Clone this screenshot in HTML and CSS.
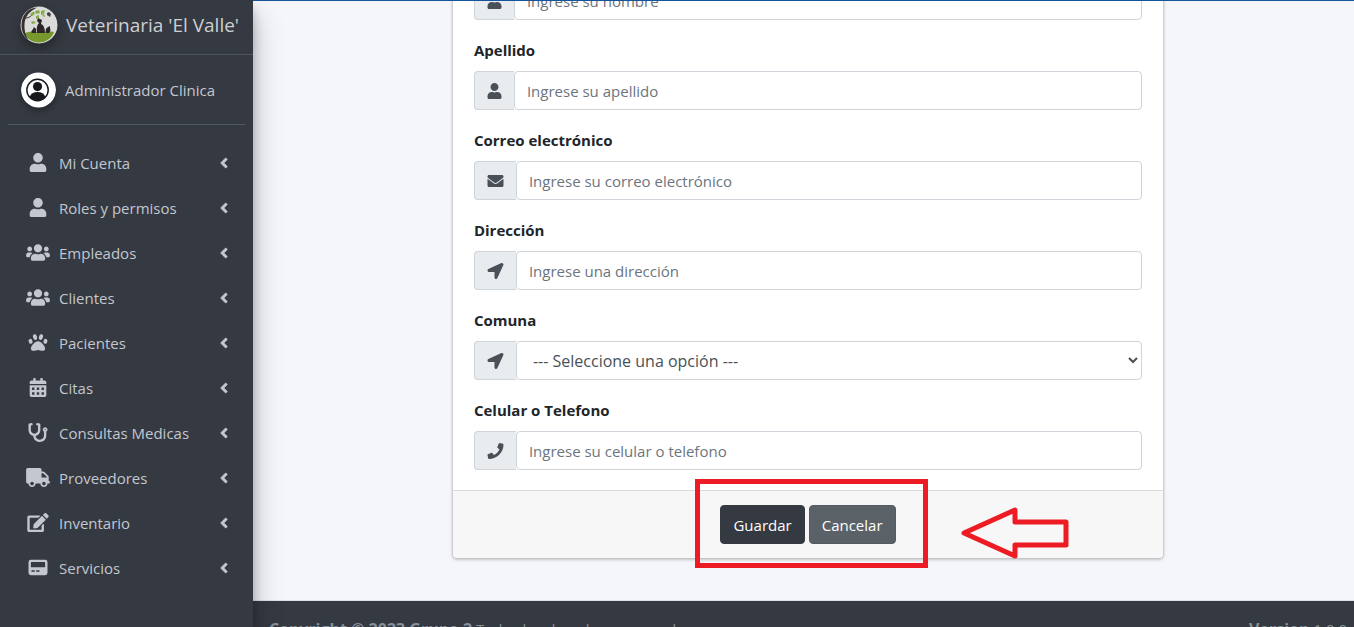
FILE: index.html
```
<!DOCTYPE html>
<html lang="es">
<head>
<meta charset="utf-8">
<meta name="viewport" content="width=device-width, initial-scale=1">
<title>Veterinaria 'El Valle'</title>
<link rel="stylesheet" href="styles.css">
</head>
<body>
<svg class="sprite" aria-hidden="true">
  <symbol id="user" viewBox="0 0 448 512"><path d="M224 256c70.7 0 128-57.3 128-128S294.7 0 224 0 96 57.3 96 128s57.3 128 128 128zm89.6 32h-16.7c-22.2 10.2-46.9 16-72.9 16s-50.6-5.8-72.9-16h-16.7C60.2 288 0 348.2 0 422.4V464c0 26.5 21.5 48 48 48h352c26.5 0 48-21.5 48-48v-41.6c0-74.2-60.2-134.4-134.4-134.4z"/></symbol>
  <symbol id="users" viewBox="0 0 640 512"><path d="M96 224c35.3 0 64-28.7 64-64s-28.7-64-64-64-64 28.7-64 64 28.7 64 64 64zm448 0c35.3 0 64-28.7 64-64s-28.7-64-64-64-64 28.7-64 64 28.7 64 64 64zm32 32h-64c-17.6 0-33.5 7.1-45.1 18.6 40.3 22.1 68.9 62 75.1 109.4h66c17.7 0 32-14.3 32-32v-32c0-35.3-28.7-64-64-64zm-256 0c61.9 0 112-50.1 112-112S381.9 32 320 32 208 82.1 208 144s50.1 112 112 112zm76.8 32h-8.3c-20.8 10-43.9 16-68.5 16s-47.6-6-68.5-16h-8.3C179.6 288 128 339.6 128 403.2V432c0 26.5 21.5 48 48 48h288c26.5 0 48-21.5 48-48v-28.8c0-63.6-51.6-115.2-115.2-115.2zm-223.7-13.4C161.5 263.1 145.6 256 128 256H64c-35.3 0-64 28.7-64 64v32c0 17.7 14.3 32 32 32h65.9c6.3-47.4 34.9-87.3 75.2-109.4z"/></symbol>
  <symbol id="paw" viewBox="0 0 512 512"><path d="M256 224c-79.4 0-192 122.800-192 200.200 0 34.900 26.800 55.800 71.700 55.800 48.900 0 81.100-25.100 120.300-25.100 39.500 0 71.900 25.100 120.300 25.100 44.900 0 71.700-20.900 71.700-55.800C448 346.800 335.400 224 256 224z"/><ellipse cx="56" cy="224" rx="52" ry="66" transform="rotate(-18 56 224)"/><ellipse cx="456" cy="224" rx="52" ry="66" transform="rotate(18 456 224)"/><ellipse cx="176" cy="110" rx="54" ry="80" transform="rotate(-14 176 110)"/><ellipse cx="336" cy="110" rx="54" ry="80" transform="rotate(14 336 110)"/></symbol>
  <symbol id="calendar" viewBox="0 0 448 512"><path fill-rule="evenodd" d="M0 192h448v272a48 48 0 0 1-48 48H48a48 48 0 0 1-48-48zM64 256v64h64v-64zM192 256v64h64v-64zM320 256v64h64v-64zM64 384v64h64v-64zM192 384v64h64v-64zM320 384v64h64v-64z"/><path d="M448 160H0v-48a48 48 0 0 1 48-48h48V12q0-12 12-12h40q12 0 12 12v52h128V12q0-12 12-12h40q12 0 12 12v52h48a48 48 0 0 1 48 48z"/></symbol>
  <symbol id="stethoscope" viewBox="0 0 512 512"><path d="M447.1 112c-34.2.5-62.3 28.4-63 62.600-.5 24.300 12.500 45.600 32 56.800V344c0 57.300-50.200 104-112 104-60 0-109.200-44.100-111.900-99.200C265 333.800 320 269.200 320 192V36.600c0-11.400-8.100-21.300-19.300-23.500L237.800.5c-13-2.600-25.600 5.800-28.200 18.800L206.400 35c-2.600 13 5.800 25.600 18.800 28.200l30.700 6.100v121.400c0 52.900-42.200 96.700-95.100 97.200-53.400.5-96.900-42.700-96.900-96V69.400l30.700-6.100c13-2.600 21.400-15.200 18.800-28.200l-3.100-15.700C107.700 6.400 95.100-2 82.100.6L19.300 13C8.100 15.300 0 25.100 0 36.600V192c0 77.300 55.100 142 128.100 156.800C130.700 439.200 208.600 512 304 512c97 0 176-75.400 176-168V231.400c19.100-11.100 32-31.700 32-55.400 0-35.700-29.200-64.500-64.900-64zm.9 80c-8.800 0-16-7.200-16-16s7.200-16 16-16 16 7.200 16 16-7.200 16-16 16z"/></symbol>
  <symbol id="truck" viewBox="0 0 640 512"><path d="M624 352h-16V243.900c0-12.700-5.100-24.900-14.100-33.900L494 110.100c-9-9-21.200-14.100-33.900-14.100H416V48c0-26.500-21.500-48-48-48H48C21.500 0 0 21.500 0 48v320c0 26.500 21.500 48 48 48h16c0 53 43 96 96 96s96-43 96-96h128c0 53 43 96 96 96s96-43 96-96h48c8.800 0 16-7.200 16-16v-32c0-8.800-7.200-16-16-16zM160 464c-26.500 0-48-21.500-48-48s21.500-48 48-48 48 21.500 48 48-21.500 48-48 48zm320 0c-26.500 0-48-21.500-48-48s21.500-48 48-48 48 21.500 48 48-21.500 48-48 48zm80-208H416V144h44.100l99.900 99.900V256z"/></symbol>
  <symbol id="edit" viewBox="0 0 576 512"><path d="M402.6 83.2l90.2 90.2c3.800 3.800 3.800 10 0 13.800L274.400 405.600l-92.800 10.300c-12.400 1.400-22.900-9.100-21.500-21.500l10.300-92.800L388.800 83.200c3.800-3.800 10-3.800 13.800 0zm162-22.900l-48.800-48.800c-15.200-15.200-39.900-15.200-55.200 0l-35.400 35.400c-3.800 3.800-3.800 10 0 13.800l90.200 90.200c3.800 3.800 10 3.800 13.800 0l35.400-35.400c15.200-15.300 15.200-40 0-55.200zM384 346.200V448H64V128h229.800c3.200 0 6.200-1.300 8.500-3.500l40-40c7.600-7.600 2.200-20.500-8.500-20.500H48C21.500 64 0 85.500 0 112v352c0 26.500 21.500 48 48 48h352c26.500 0 48-21.500 48-48V306.200c0-10.700-12.900-16-20.500-8.500l-40 40c-2.200 2.300-3.500 5.300-3.500 8.500z"/></symbol>
  <symbol id="card" viewBox="0 0 512 512"><path fill-rule="evenodd" d="M64 48h384a64 64 0 0 1 64 64v288a64 64 0 0 1-64 64H64a64 64 0 0 1-64-64V112a64 64 0 0 1 64-64zM80 110q-16 0-16 16v120h384V126q0-16-16-16zM80 330v40h88v-40zM208 330v40h88v-40z"/></symbol>
  <symbol id="angle" viewBox="0 0 256 512"><path d="M31.7 239l136-136c9.400-9.400 24.600-9.400 33.900 0l22.600 22.600c9.400 9.400 9.400 24.600 0 33.900L127.900 256l96.400 96.400c9.400 9.400 9.400 24.600 0 33.900L201.700 409c-9.400 9.400-24.600 9.400-33.900 0l-136-136c-9.500-9.400-9.500-24.600-.1-34z" stroke="currentColor" stroke-width="18"/></symbol>
  <symbol id="envelope" viewBox="0 0 512 512"><path d="M502.3 190.8c3.900-3.100 9.700-.2 9.700 4.700V400c0 26.500-21.500 48-48 48H48c-26.500 0-48-21.500-48-48V195.600c0-5 5.700-7.800 9.700-4.700 22.400 17.400 52.100 39.500 154.100 113.600 21.100 15.400 56.700 47.800 92.200 47.600 35.700.3 72-32.800 92.300-47.600 102-74.100 131.600-96.300 154-113.700zM256 320c23.200.4 56.600-29.200 73.400-41.400 132.700-96.300 142.800-104.700 173.400-128.700 5.800-4.500 9.200-11.500 9.200-18.900v-19c0-26.500-21.500-48-48-48H48c-26.500 0-48 21.500-48 48v19c0 7.400 3.400 14.300 9.200 18.900 30.600 23.900 40.700 32.400 173.400 128.700 16.800 12.200 50.200 41.800 73.400 41.400z"/></symbol>
  <symbol id="arrow" viewBox="0 0 512 512"><path d="M444.500 3.500L28.700 195.400c-48 22.400-32 92.800 19.200 92.800h175.900v175.900c0 51.200 70.400 67.200 92.800 19.200l191.900-415.800c16-38.400-25.600-80-64-64z"/></symbol>
  <symbol id="phone" viewBox="0 0 512 512"><path d="M493.400 24.600l-104-24c-11.300-2.600-22.900 3.300-27.500 13.900l-48 112c-4.200 9.800-1.400 21.300 6.900 28l60.600 49.600c-36 76.700-98.900 140.500-177.200 177.200l-49.600-60.600c-6.800-8.300-18.200-11.100-28-6.900l-112 48C3.900 366.500-2 378.100.6 389.400l24 104C27.100 504.200 36.700 512 48 512c256.100 0 464-207.500 464-464 0-11.200-7.700-20.900-18.600-23.400z"/></symbol>
</svg>

<div class="layout">
  <aside class="sidebar">
    <a class="brand" href="#">
      <svg class="brand-logo" viewBox="0 0 38 38" aria-hidden="true">
        <circle cx="19" cy="19" r="18.500" fill="#d9dcd9"/>
        <path d="M5 27c5-2 9-1 14-1s11-1 15 0c-2 6-8 10.500-15 10.500S7 33 5 27z" fill="#76982c"/>
        <path d="M17 1.500C8 2 1.500 9 1.500 19c0 7 3 12 7 15-3-5-4.500-10-4-16C5 10 10 5 17 1.500z" fill="#39302e"/>
        <path d="M5 12c4 0 7-2 9-6" fill="none" stroke="#39302e" stroke-width="1"/>
        <path d="M10 8l3-2 2 2-3 2zM15 5l4-1 1 3-4 1zM21 5l4-1-1 4-3 1zM11 16l3-1 2 2-4 1zM16 10l3-1v3l-3 1zM22 10l2-2 1 3z" fill="#88ab49"/>
        <path d="M27 7l2-1 2 2-1 3-3-2z" fill="#453e42"/>
        <path d="M17 27c-1-4 0-8 2-10l-2-2 1-3 2 1 2 1-1 4c3 1 4 5 4 9zM26 27c-1-3 0-5 2-6l2-1v2c1 2 0 4-1 5zM12 27l-1-1 2-3 1-2 2 2v4z" fill="#2d2629"/>
      </svg>
      <span>Veterinaria 'El Valle'</span>
    </a>
    <div class="account">
      <svg class="avatar" viewBox="0 0 36 36" aria-hidden="true">
        <circle cx="18" cy="18" r="18" fill="#fff"/>
        <circle cx="17" cy="18" r="11" fill="none" stroke="#16181b" stroke-width="1.500"/>
        <circle cx="17" cy="14.500" r="4.700" fill="#16181b"/>
        <path d="M9 25c1-3 4-5 8-5s7 2 8 5c-2 2.500-5 4-8 4s-6-1.500-8-4z" fill="#16181b"/>
      </svg>
      <a href="#">Administrador Clinica</a>
    </div>
    <nav class="menu">
      <a href="#"><svg class="menu-icon"><use href="#user"/></svg><span>Mi Cuenta</span><svg class="angle"><use href="#angle"/></svg></a>
      <a href="#"><svg class="menu-icon"><use href="#user"/></svg><span>Roles y permisos</span><svg class="angle"><use href="#angle"/></svg></a>
      <a href="#"><svg class="menu-icon"><use href="#users"/></svg><span>Empleados</span><svg class="angle"><use href="#angle"/></svg></a>
      <a href="#"><svg class="menu-icon"><use href="#users"/></svg><span>Clientes</span><svg class="angle"><use href="#angle"/></svg></a>
      <a href="#"><svg class="menu-icon"><use href="#paw"/></svg><span>Pacientes</span><svg class="angle"><use href="#angle"/></svg></a>
      <a href="#"><svg class="menu-icon"><use href="#calendar"/></svg><span>Citas</span><svg class="angle"><use href="#angle"/></svg></a>
      <a href="#"><svg class="menu-icon"><use href="#stethoscope"/></svg><span>Consultas Medicas</span><svg class="angle"><use href="#angle"/></svg></a>
      <a href="#"><svg class="menu-icon"><use href="#truck"/></svg><span>Proveedores</span><svg class="angle"><use href="#angle"/></svg></a>
      <a href="#"><svg class="menu-icon"><use href="#edit"/></svg><span>Inventario</span><svg class="angle"><use href="#angle"/></svg></a>
      <a href="#"><svg class="menu-icon"><use href="#card"/></svg><span>Servicios</span><svg class="angle"><use href="#angle"/></svg></a>
    </nav>
  </aside>

  <div class="page">
    <main class="content">
      <form class="card">
        <div class="card-body">
          <div class="field">
            <div class="group"><span class="addon"><svg class="narrow"><use href="#user"/></svg></span><input type="text" aria-label="Nombre" placeholder="Ingrese su nombre"></div>
          </div>
          <div class="field">
            <label for="apellido">Apellido</label>
            <div class="group"><span class="addon"><svg class="narrow"><use href="#user"/></svg></span><input id="apellido" type="text" placeholder="Ingrese su apellido"></div>
          </div>
          <div class="field">
            <label for="correo">Correo electrónico</label>
            <div class="group"><span class="addon"><svg><use href="#envelope"/></svg></span><input id="correo" type="email" placeholder="Ingrese su correo electrónico"></div>
          </div>
          <div class="field">
            <label for="direccion">Dirección</label>
            <div class="group"><span class="addon"><svg><use href="#arrow"/></svg></span><input id="direccion" type="text" placeholder="Ingrese una dirección"></div>
          </div>
          <div class="field">
            <label for="comuna">Comuna</label>
            <div class="group"><span class="addon"><svg><use href="#arrow"/></svg></span><select id="comuna"><option>--- Seleccione una opción ---</option></select></div>
          </div>
          <div class="field">
            <label for="celular">Celular o Telefono</label>
            <div class="group"><span class="addon"><svg><use href="#phone"/></svg></span><input id="celular" type="tel" placeholder="Ingrese su celular o telefono"></div>
          </div>
        </div>
        <div class="card-footer">
          <button class="btn btn-dark" type="submit">Guardar</button>
          <button class="btn btn-gray" type="button">Cancelar</button>
          <div class="highlight"></div>
          <svg class="pointer" viewBox="0 0 108 52" aria-hidden="true"><path d="M3 26L54 3v12h51v23H54v11z" fill="none" stroke="#ed1c24" stroke-width="5" stroke-linejoin="round"/></svg>
        </div>
      </form>
    </main>
    <footer class="footer">
      <div><strong>Copyright © 2023 Grupo 2</strong> Todos los derechos reservados</div>
      <div><strong>Version</strong> 1.0.0</div>
    </footer>
  </div>
</div>
</body>
</html>
```
FILE: styles.css
```
* { box-sizing: border-box; }

body {
  margin: 0;
  background: #f4f6f9;
  color: #212529;
  font: 15px/24px "Open Sans", "Noto Sans", sans-serif;
}

a { color: inherit; text-decoration: none; }

.sprite { position: absolute; width: 0; height: 0; }

.layout {
  display: grid;
  grid-template-columns: 253px minmax(0, 1fr);
  height: 100vh;
  overflow: hidden;
}

.sidebar {
  position: relative;
  z-index: 1;
  background: #353941;
  color: #c2c7d0;
  box-shadow: 0 14px 28px rgba(0, 0, 0, .25), 0 10px 10px rgba(0, 0, 0, .22);
}

.brand {
  display: flex;
  align-items: center;
  gap: 8px;
  height: 55px;
  padding: 0 8px 4px 20px;
  border-bottom: 1px solid #4b545c;
  color: #cdcfd2;
  font-size: 19px;
  white-space: nowrap;
}

.brand-logo {
  flex: none;
  width: 38px;
  height: 38px;
  border-radius: 50%;
  box-shadow: 0 5px 10px rgba(0, 0, 0, .3);
}

.account {
  display: flex;
  align-items: center;
  gap: 9px;
  height: 70px;
  margin: 0 8px;
  padding-left: 13px;
  border-bottom: 1px solid #4f5962;
}

.avatar {
  width: 35px;
  height: 36px;
  border-radius: 50%;
  box-shadow: 0 3px 6px rgba(0, 0, 0, .3);
}

.menu {
  display: flex;
  flex-direction: column;
  gap: 4px;
  padding: 17px 24px 0 26px;
}

.menu a {
  display: grid;
  grid-template-columns: 24px 1fr 10px;
  align-items: center;
  column-gap: 9px;
  height: 41px;
}

svg { fill: currentColor; }

.menu-icon { width: 24px; height: 19px; }

.angle { width: 10px; height: 16px; }

.page {
  display: flex;
  flex-direction: column;
  overflow: hidden;
  border-top: 1px solid #17539a;
}

.content {
  flex: none;
  padding: 0 8px 42px 17px;
}

.card {
  width: 66%;
  margin: -40px auto 0;
  background: #fff;
  border-radius: 4px;
  box-shadow: 0 0 1px rgba(0, 0, 0, .3), 0 1px 3px 1px rgba(0, 0, 0, .2);
}

.card-body {
  display: flex;
  flex-direction: column;
  gap: 18px;
  padding: 20px 21px;
}

.field label {
  display: block;
  margin-bottom: 9px;
  font-weight: 700;
}

.group { display: flex; height: 39px; }

.addon {
  display: flex;
  align-items: center;
  padding: 0 12px;
  background: #e9ecef;
  border: 1px solid #ced4da;
  border-right: 0;
  border-radius: 4px 0 0 4px;
  color: #495057;
}

.addon svg { width: 17px; height: 16px; }

.addon .narrow { width: 15px; }

.group input,
.group select {
  flex: 1;
  min-width: 0;
  padding: 6px 12px;
  border: 1px solid #ced4da;
  border-radius: 4px;
  background: #fff;
  color: #495057;
  font: inherit;
}

.group select { font-size: 16px; }

.group input::placeholder { color: #6c757d; opacity: 1; }

.card-footer {
  position: relative;
  display: flex;
  justify-content: center;
  gap: 4px;
  padding: 14px 20px;
  background: #f7f7f7;
  border-top: 1px solid #d9d9d9;
  border-radius: 0 0 4px 4px;
}

.btn {
  height: 39px;
  padding: 0 12px;
  border: 1px solid;
  border-radius: 4px;
  color: #fff;
  font: inherit;
}

.btn-dark { background: #353941; border-color: #343a40; }

.btn-gray { background: #5a6268; border-color: #545b62; }

.highlight {
  position: absolute;
  top: -12px;
  left: calc(50% - 113px);
  width: 233px;
  height: 89px;
  border: 5px solid #ed1c24;
}

.pointer {
  position: absolute;
  top: 16px;
  left: calc(50% + 153px);
  width: 108px;
  height: 52px;
}

.footer {
  flex: none;
  display: flex;
  justify-content: space-between;
  padding: 16px 7px 16px 16px;
  background: #353941;
  border-top: 1px solid #dee2e6;
  color: #869099;
}

.footer strong { font-size: 16px; }
```
